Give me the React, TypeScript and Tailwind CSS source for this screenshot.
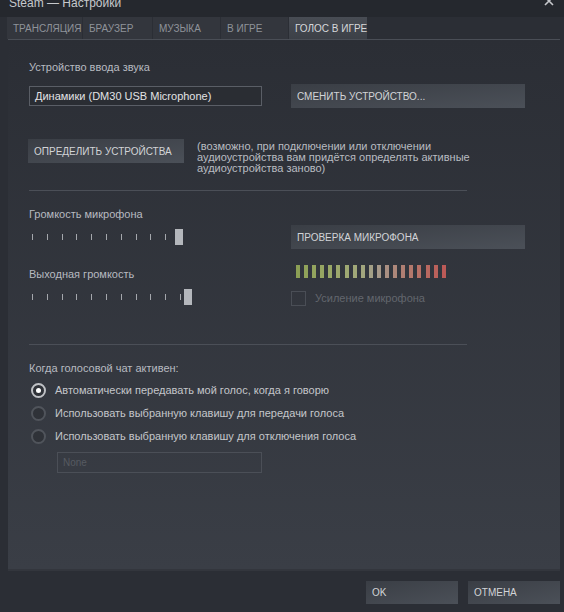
import React from 'react';

const tabs = [
  { label: 'ТРАНСЛЯЦИЯ', w: 'w-[75px]' },
  { label: 'БРАУЗЕР', w: 'w-[69px]' },
  { label: 'МУЗЫКА', w: 'w-[67px]' },
  { label: 'В ИГРЕ', w: 'w-[67px]' },
  { label: 'ГОЛОС В ИГРЕ', w: 'w-[78px]', active: true },
];

const meterColors = [
  '#8c9f55', '#90a25a', '#93a45e', '#96a562', '#99a767', '#9ca76c', '#9ea872',
  '#a0a778', '#a2a67e', '#a39f86', '#a69889', '#a98f82', '#ad877a', '#b07f73',
  '#b3786c', '#b67066', '#b86860', '#ba615b', '#bc5a57',
];

function Button({ children, className = '' }: { children: React.ReactNode; className?: string }) {
  return (
    <div
      className={`flex items-center whitespace-nowrap pl-[6px] bg-gradient-to-br from-[#3a3e45] to-[#4b5058] text-[#d2d4d7] text-[10px] ${className}`}
    >
      {children}
    </div>
  );
}

function Slider({ extraTick, thumbGap }: { extraTick?: boolean; thumbGap: string }) {
  const ticks = Array.from({ length: extraTick ? 11 : 10 });
  return (
    <div className="flex items-center h-[16px] pl-[3px]">
      <div className="flex items-center gap-[13.8px]">
        {ticks.map((_, i) => (
          <div key={i} className="w-[1px] h-[6px] bg-[#a4a7ac]" />
        ))}
      </div>
      <div className={`w-[8px] h-[16px] bg-[#b4b7bc] ${thumbGap}`} />
    </div>
  );
}

function Radio({ checked, label }: { checked?: boolean; label: string }) {
  return (
    <div className="flex items-center h-[23px]">
      <div
        className={`ml-[2px] w-[15px] h-[15px] rounded-full border-2 flex items-center justify-center bg-[#2f3238] ${
          checked ? 'border-[#bfc1c5]' : 'border-[#50545b]'
        }`}
      >
        {checked && <div className="w-[5px] h-[5px] rounded-full bg-white" />}
      </div>
      <span className="ml-[9px] text-[#c4c6ca] whitespace-nowrap">{label}</span>
    </div>
  );
}

export default function App() {
  return (
    <div className="w-[564px] h-[612px] overflow-hidden bg-[#2b2e35] font-['Liberation_Sans',Arial,sans-serif] text-[11px] leading-[13px] text-[#b7bac0] flex flex-col">
      {/* title bar */}
      <div className="h-[17px] bg-[#25282e] flex justify-between items-start overflow-hidden pl-[9px] pr-[10px]">
        <span className="text-[12px] leading-[14px] text-[#c6c8cc] -mt-[4px] whitespace-nowrap">Steam — Настройки</span>
        <svg width="10" height="10" viewBox="0 0 10 10" className="-mt-[4px]">
          <path d="M1 1 L9 9 M9 1 L1 9" stroke="#c6c8cc" strokeWidth="1.6" />
        </svg>
      </div>

      {/* tabs */}
      <div className="h-[22px] flex gap-[1px] ml-[7px]">
        {tabs.map((t) => (
          <div
            key={t.label}
            className={`${t.w} h-full flex items-center pl-[6px] text-[10px] whitespace-nowrap ${
              t.active
                ? 'bg-gradient-to-b from-[#484c54] to-[#3c4047] text-[#d6d8db]'
                : 'bg-[#33363d] text-[#8f939a]'
            }`}
          >
            {t.label}
          </div>
        ))}
      </div>
      <div className="ml-[8px] w-[552px] h-[1px] bg-[#4a4e56]" />

      {/* panel */}
      <div className="ml-[8px] w-[552px] h-[529px] bg-gradient-to-b from-[#2b2e35] to-[#3a3e46] pl-[21px] pt-[21px] flex flex-col">
        <div>Устройство ввода звука</div>

        <div className="mt-[10px] h-[24px] flex items-center">
          <div className="w-[233px] h-[20px] border border-[#5a5e66] bg-[#2a2d33] flex items-center pl-[5px] text-[11px] text-[#e2e3e5] whitespace-nowrap">
            Динамики (DM30 USB Microphone)
          </div>
          <Button className="ml-[29px] w-[234px] h-[24px]">СМЕНИТЬ УСТРОЙСТВО...</Button>
        </div>

        <div className="mt-[31px] flex items-start">
          <Button className="-ml-[1px] w-[156px] h-[24px]">ОПРЕДЕЛИТЬ УСТРОЙСТВА</Button>
          <div className="ml-[13px] mt-[2px] leading-[11px] text-[#b9bcc1] whitespace-nowrap">
            (возможно, при подключении или отключении
            <br />
            аудиоустройства вам придётся определять активные
            <br />
            аудиоустройства заново)
          </div>
        </div>

        <div className="mt-[16px] w-[438px] h-[1px] bg-[#4b4f57]" />

        <div className="mt-[17px] flex">
          <div className="w-[262px] flex flex-col">
            <div>Громкость микрофона</div>
            <div className="mt-[8px]">
              <Slider thumbGap="ml-[9px]" />
            </div>
            <div className="mt-[23px]">Выходная громкость</div>
            <div className="mt-[8px]">
              <Slider extraTick thumbGap="ml-[3px]" />
            </div>
          </div>
          <div className="flex flex-col">
            <Button className="mt-[17px] w-[234px] h-[24px]">ПРОВЕРКА МИКРОФОНА</Button>
            <div className="mt-[16px] ml-[5px] h-[13px] flex gap-[4.1px]">
              {meterColors.map((c, i) => (
                <div key={i} className="w-[4px] h-full" style={{ backgroundColor: c }} />
              ))}
            </div>
            <div className="mt-[13px] h-[15px] flex items-center">
              <div className="w-[15px] h-[15px] border border-[#4a4e56]" />
              <span className="ml-[9px] text-[#62666d]">Усиление микрофона</span>
            </div>
          </div>
        </div>

        <div className="mt-[38px] w-[438px] h-[1px] bg-[#4b4f57]" />

        <div className="mt-[17px]">Когда голосовой чат активен:</div>
        <div className="mt-[4px] flex flex-col">
          <Radio checked label="Автоматически передавать мой голос, когда я говорю" />
          <Radio label="Использовать выбранную клавишу для передачи голоса" />
          <Radio label="Использовать выбранную клавишу для отключения голоса" />
        </div>
        <div className="mt-[4px] ml-[28px] w-[205px] h-[21px] border border-[#4b4f57] flex items-center pl-[5px] text-[10px] text-[#565a61]">
          None
        </div>
      </div>
      <div className="ml-[8px] w-[552px] h-[2px] bg-[#33363d]" />

      {/* footer */}
      <div className="mt-[10px] flex">
        <Button className="ml-[366px] w-[92px] h-[23px]">OK</Button>
        <Button className="ml-[10px] w-[92px] h-[23px]">ОТМЕНА</Button>
      </div>
    </div>
  );
}
